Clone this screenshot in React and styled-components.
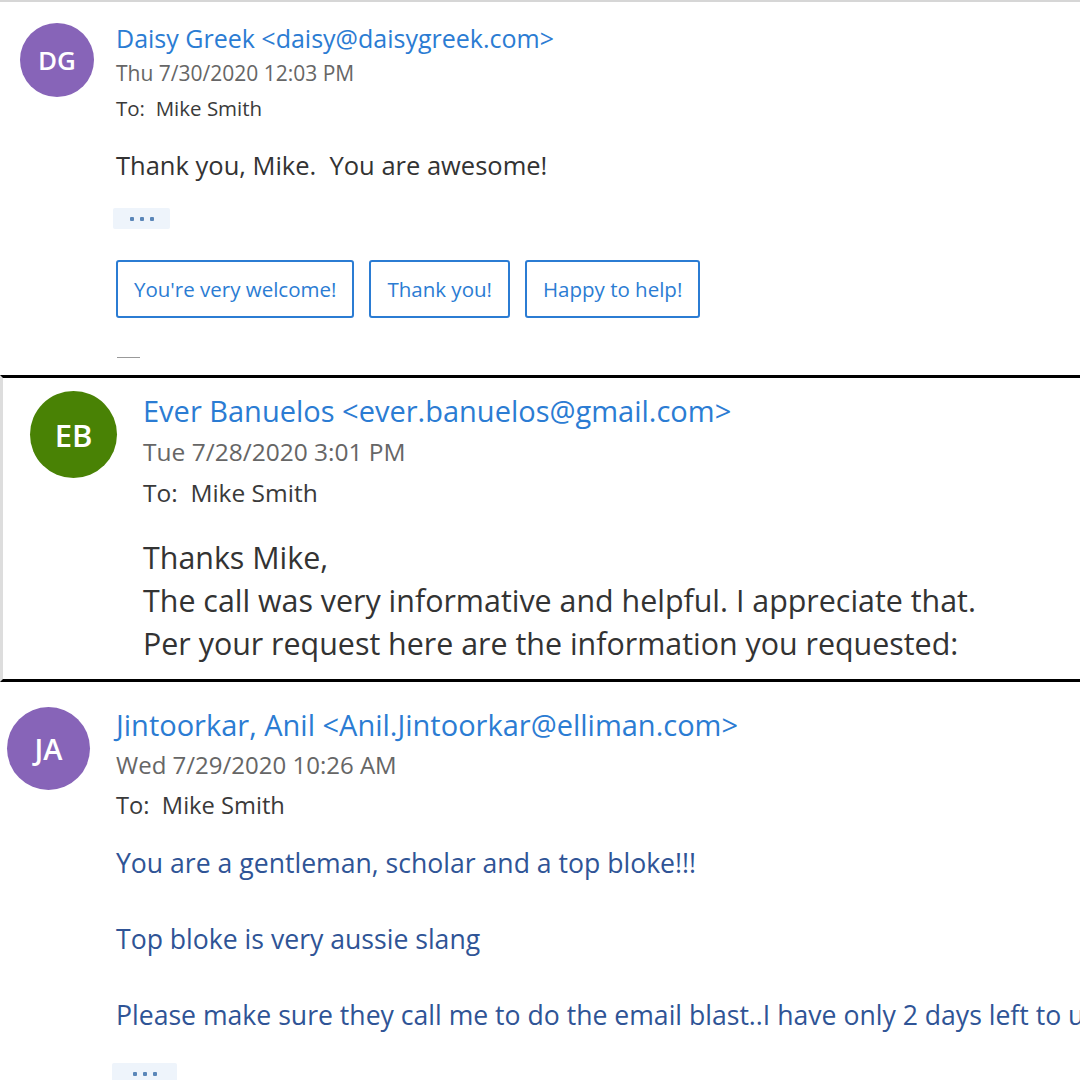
import styled, { createGlobalStyle } from 'styled-components';

const GlobalStyle = createGlobalStyle`
    html, body {
        margin: 0;
        padding: 0;
        background: #fff;
    }
    body {
        font-family: "Open Sans", "Noto Sans", "DejaVu Sans", sans-serif;
        color: #333;
        width: 1080px;
        height: 1080px;
        overflow: hidden;
    }
`;

const messages = [
    {
        id: 1,
        initials: 'DG',
        avatar: '#8764b8',
        from: 'Daisy Greek <daisy@daisygreek.com>',
        date: 'Thu 7/30/2020 12:03 PM',
        body: ['Thank you, Mike.  You are awesome!'],
        replies: ["You're very welcome!", 'Thank you!', 'Happy to help!'],
    },
    {
        id: 2,
        initials: 'EB',
        avatar: '#498205',
        from: 'Ever Banuelos <ever.banuelos@gmail.com>',
        date: 'Tue 7/28/2020 3:01 PM',
        body: [
            'Thanks Mike,',
            'The call was very informative and helpful. I appreciate that.',
            'Per your request here are the information you requested:',
        ],
    },
    {
        id: 3,
        initials: 'JA',
        avatar: '#8764b8',
        from: 'Jintoorkar, Anil <Anil.Jintoorkar@elliman.com>',
        date: 'Wed 7/29/2020 10:26 AM',
        body: [
            'You are a gentleman, scholar and a top bloke!!!',
            'Top bloke is very aussie slang',
            'Please make sure they call me to do the email blast..I have only 2 days left to use it',
        ],
    },
];

const MessageHeader = ({ initials, avatar, from, date }) => (
    <Header>
        <Avatar $bg={avatar}>{initials}</Avatar>
        <Meta>
            <From>{from}</From>
            <DateLine>{date}</DateLine>
            <ToLine>To:&nbsp; Mike Smith</ToLine>
        </Meta>
    </Header>
);

const App = () => {
    const [daisy, ever, anil] = messages;
    return (
        <>
            <GlobalStyle />
            <Page>
                <DaisyCard>
                    <MessageHeader {...daisy} />
                    <Content>
                        <Body>
                            {daisy.body.map((line) => <p key={line}>{line}</p>)}
                        </Body>
                        <More><span /><span /><span /></More>
                        <Replies>
                            {daisy.replies.map((r) => <Reply key={r}>{r}</Reply>)}
                        </Replies>
                        <Dash />
                    </Content>
                </DaisyCard>

                <EverCard>
                    <MessageHeader {...ever} />
                    <Content>
                        <Body>
                            {ever.body.map((line) => <p key={line}>{line}</p>)}
                        </Body>
                    </Content>
                </EverCard>

                <AnilCard>
                    <MessageHeader {...anil} />
                    <Content>
                        <Body>
                            {anil.body.map((line) => <p key={line}>{line}</p>)}
                        </Body>
                        <More><span /><span /><span /></More>
                    </Content>
                </AnilCard>
            </Page>
        </>
    );
};

const Page = styled.main`
    display: flex;
    flex-direction: column;
    width: 1080px;
    height: 1080px;
    overflow: hidden;
`;

const Card = styled.section`
    box-sizing: border-box;
    overflow: hidden;
    white-space: pre;
`;

const Header = styled.div`
    display: flex;
    align-items: flex-start;
`;

const Avatar = styled.div`
    flex: none;
    border-radius: 50%;
    background: ${({ $bg }) => $bg};
    color: #fff;
    font-weight: 600;
    display: flex;
    align-items: center;
    justify-content: center;
`;

const Meta = styled.div`
    display: flex;
    flex-direction: column;
`;

const From = styled.div`
    color: #2b7cd3;
`;

const DateLine = styled.div`
    color: #666;
`;

const ToLine = styled.div`
    color: #3a3a3a;
`;

const Content = styled.div``;

const Body = styled.div`
    p {
        margin: 0;
    }
`;

const More = styled.div`
    display: flex;
    align-items: center;
    justify-content: center;
    gap: 6px;
    background: #eef4fb;
    border-radius: 2px;
    span {
        width: 4px;
        height: 4px;
        background: #5a86b8;
        border-radius: 1px;
    }
`;

const Replies = styled.div`
    display: flex;
    gap: 15px;
`;

const Reply = styled.button`
    font-family: inherit;
    height: 58px;
    padding: 0 16px;
    background: #fff;
    border: 2px solid #2b7cd3;
    border-radius: 3px;
    color: #2b7cd3;
    font-size: 20.5px;
`;

const Dash = styled.div`
    width: 23px;
    height: 1px;
    background: #999;
`;

const DaisyCard = styled(Card)`
    height: 375px;
    flex: none;
    border-top: 2px solid #d6d6d6;
    padding: 21px 0 0 20px;

    ${Avatar} {
        width: 74px;
        height: 74px;
        font-size: 26px;
    }
    ${Meta} {
        margin-left: 22px;
        line-height: 35px;
        margin-top: -2px;
    }
    ${From} { font-size: 25px; }
    ${DateLine} { font-size: 21px; }
    ${ToLine} { font-size: 20.5px; }
    ${Content} {
        margin-left: 96px;
        margin-top: 19px;
    }
    ${Body} {
        font-size: 25.5px;
        line-height: 40px;
    }
    ${More} {
        width: 57px;
        height: 21px;
        margin: 23px 0 0 -3px;
    }
    ${Replies} {
        margin-top: 31px;
    }
    ${Dash} {
        margin: 39px 0 0 1px;
    }
`;

const EverCard = styled(Card)`
    height: 307px;
    flex: none;
    border-top: 3px solid #000;
    border-bottom: 3px solid #000;
    border-left: 3px solid #ddd;
    padding: 13px 0 0 27px;

    ${Avatar} {
        width: 87px;
        height: 87px;
        font-size: 31px;
    }
    ${Meta} {
        margin-left: 26px;
        line-height: 41px;
        margin-top: -1px;
    }
    ${From} { font-size: 29px; }
    ${DateLine} { font-size: 24.5px; }
    ${ToLine} { font-size: 24.5px; }
    ${Content} {
        margin-left: 113px;
        margin-top: 23px;
    }
    ${Body} {
        font-size: 30.4px;
        line-height: 43px;
    }
`;

const AnilCard = styled(Card)`
    flex: 1;
    padding: 25px 0 0 7px;

    ${Avatar} {
        width: 83px;
        height: 83px;
        font-size: 29px;
    }
    ${Meta} {
        margin-left: 26px;
        line-height: 40px;
        margin-top: -2px;
    }
    ${From} { font-size: 29px; }
    ${DateLine} { font-size: 24px; }
    ${ToLine} { font-size: 23.7px; }
    ${Content} {
        margin-left: 109px;
        margin-top: 19px;
    }
    ${Body} {
        font-size: 26.6px;
        line-height: 38px;
        color: #2f5496;
        p + p {
            margin-top: 38px;
        }
    }
    ${More} {
        width: 65px;
        height: 22px;
        margin: 29px 0 0 -4px;
    }
`;

export default App;
